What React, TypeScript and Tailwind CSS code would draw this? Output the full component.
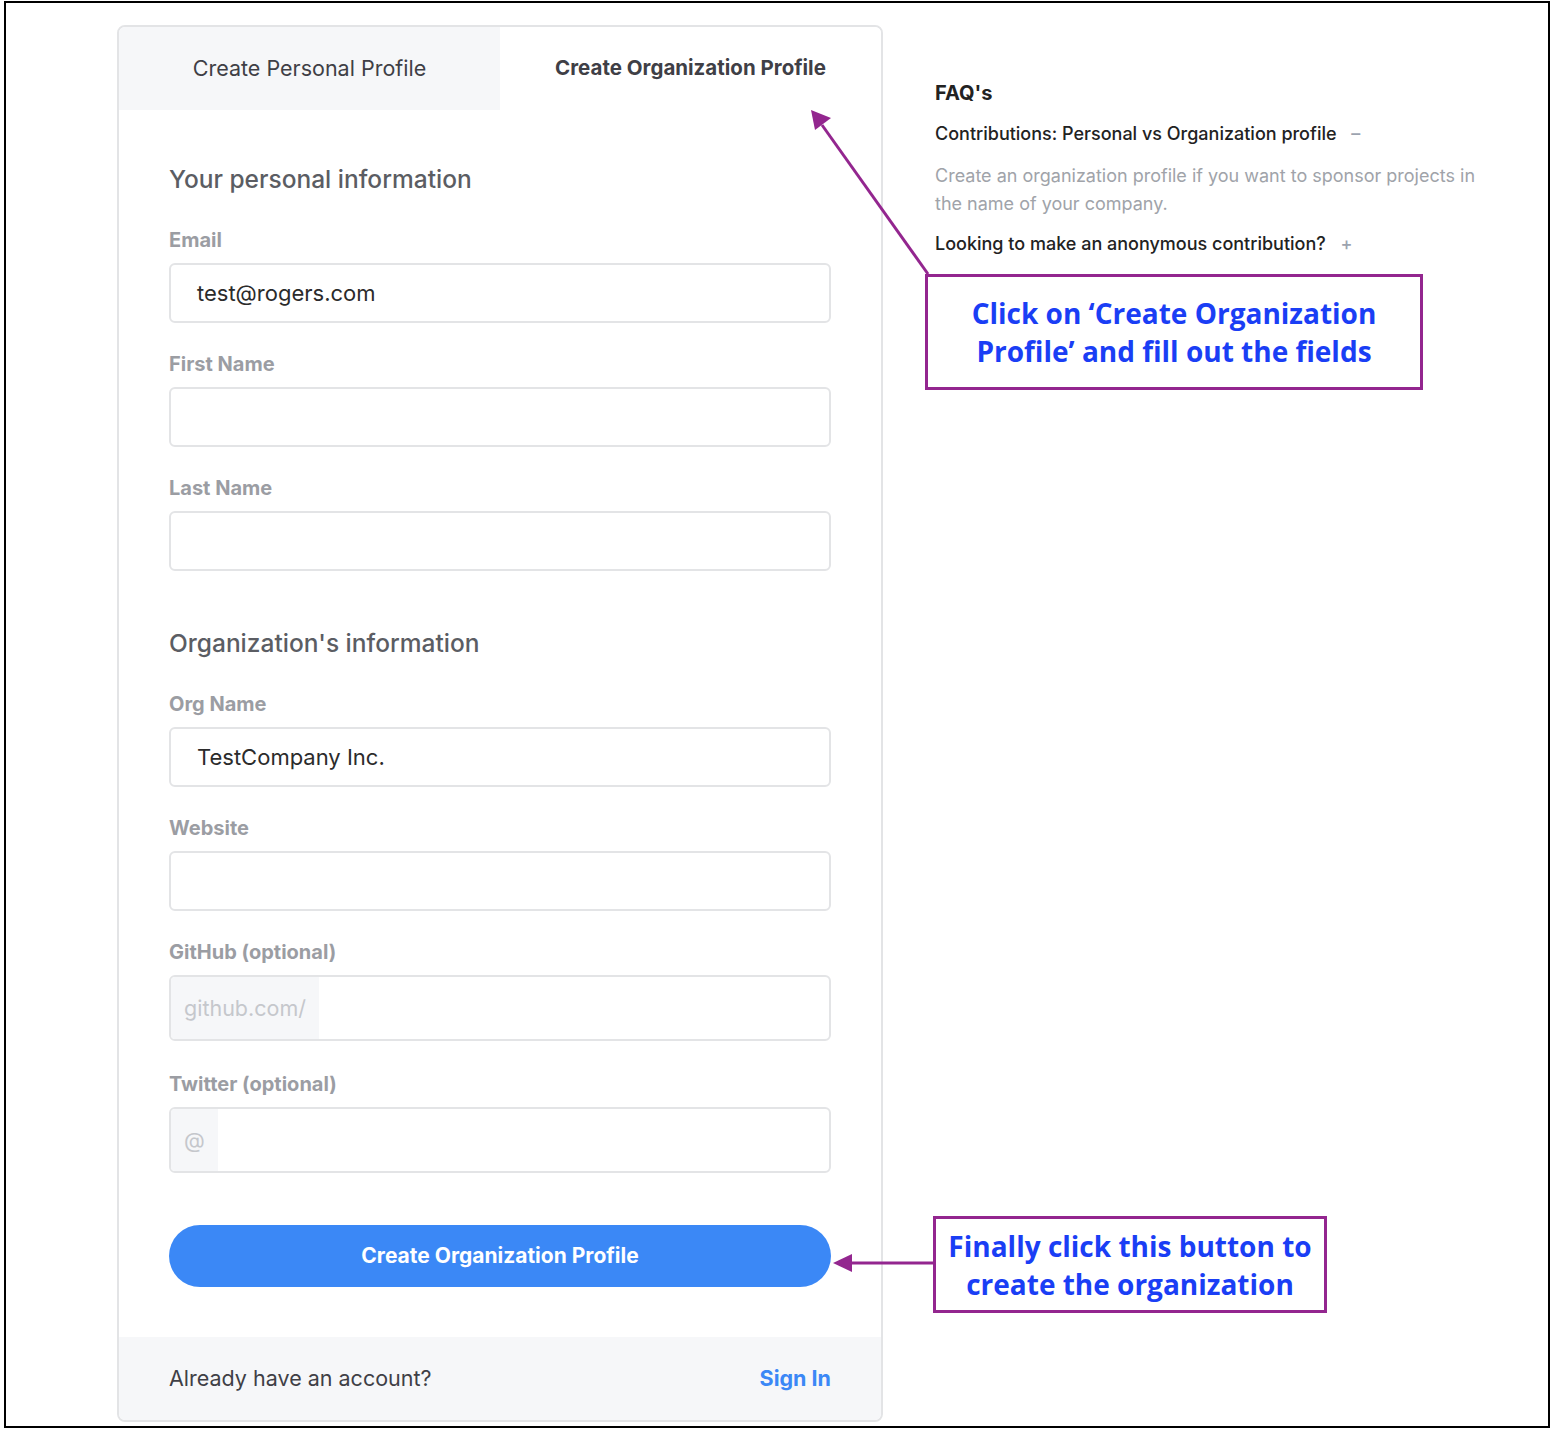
const ui = { fontFamily: "Inter, 'Liberation Sans', sans-serif" };
const note = { fontFamily: "'Open Sans', 'Noto Sans', sans-serif" };

function Field({ label, value, prefix, tall }: { label: string; value?: string; prefix?: string; tall?: boolean }) {
  return (
    <div className="flex flex-col">
      <label className="h-[28px] leading-[28px] text-[20px] font-bold text-[#9b9da3] mb-[9px]">{label}</label>
      {prefix ? (
        <div className={`flex items-stretch border-2 border-[#e3e4e6] rounded-md ${tall ? "h-[66px]" : "h-[60px]"} overflow-hidden`}>
          <span className="flex items-center bg-[#f6f7f9] px-[13px] text-[21.5px] text-[#c5c7cc]">{prefix}</span>
          <span className="flex-1" />
        </div>
      ) : (
        <div className="flex items-center h-[60px] border-2 border-[#e3e4e6] rounded-md pl-[26px] text-[22px] text-[#2b2b2b]">
          {value}
        </div>
      )}
    </div>
  );
}

export default function App() {
  return (
    <div className="relative w-[1554px] h-[1432px] bg-white pt-[1px] pl-[4px]" style={ui}>
      <div className="w-[1546px] h-[1427px] border-2 border-black flex items-start pl-[111px] pt-[22px]">
        {/* Signup card */}
        <div className="w-[766px] border-2 border-[#e3e4e6] rounded-lg overflow-hidden flex flex-col">
          <div className="flex h-[83px]">
            <div className="w-1/2 bg-[#f6f7f9] flex items-center justify-center text-[21.5px] text-[#3f3f46]">
              Create Personal Profile
            </div>
            <div className="w-1/2 bg-white flex items-center justify-center text-[20.5px] font-bold text-[#3f3f46]">
              Create Organization Profile
            </div>
          </div>

          <div className="px-[50px] pt-[53px] pb-[50px] flex flex-col">
            <h2 className="text-[24.5px] leading-[32px] font-medium text-[#5b5d63] mb-[31px]">Your personal information</h2>
            <div className="flex flex-col gap-[27px]">
              <Field label="Email" value="test@rogers.com" />
              <Field label="First Name" />
              <Field label="Last Name" />
            </div>

            <h2 className="text-[24.5px] leading-[32px] font-medium text-[#5b5d63] mt-[56px] mb-[31px]">Organization's information</h2>
            <div className="flex flex-col gap-[27px]">
              <Field label="Org Name" value="TestCompany Inc." />
              <Field label="Website" />
              <Field label="GitHub (optional)" prefix="github.com/" tall />
              <div className="mt-[2px]">
                <Field label="Twitter (optional)" prefix="@" tall />
              </div>
            </div>

            <button className="mt-[52px] h-[62px] rounded-full bg-[#3b88f6] text-white text-[21px] font-bold">
              Create Organization Profile
            </button>
          </div>

          <div className="h-[83px] bg-[#f6f7f9] px-[50px] flex items-center justify-between text-[21.5px]">
            <span className="text-[#3f3f46]">Already have an account?</span>
            <span className="font-bold text-[#3b88f6]">Sign In</span>
          </div>
        </div>

        {/* FAQ */}
        <div className="ml-[52px] mt-[54px] w-[565px] flex flex-col">
          <h3 className="text-[20px] leading-[28px] font-bold text-[#222]">FAQ's</h3>
          <div className="mt-[13px] text-[18px] leading-[28px] font-medium text-[#222]">
            Contributions: Personal vs Organization profile <span className="ml-[10px] text-[#9ca3af]">–</span>
          </div>
          <p className="mt-[14px] text-[18px] leading-[28px] text-[#a0a3a9]">
            Create an organization profile if you want to sponsor projects in the name of your company.
          </p>
          <div className="mt-[12px] text-[18px] leading-[28px] font-medium text-[#222]">
            Looking to make an anonymous contribution? <span className="ml-[10px] text-[#9ca3af]">+</span>
          </div>
        </div>
      </div>

      {/* Annotations */}
      <div
        className="absolute left-[925px] top-[274px] w-[498px] h-[116px] border-[3px] border-[#93268f] bg-white flex items-center justify-center text-center text-[28px] leading-[38px] font-bold text-[#1a3ef5]"
        style={note}
      >
        <span>Click on ‘Create Organization<br />Profile’ and fill out the fields</span>
      </div>
      <div
        className="absolute left-[933px] top-[1216px] w-[394px] h-[97px] border-[3px] border-[#93268f] bg-white flex items-center justify-center text-center text-[28px] leading-[38px] font-bold text-[#1a3ef5]"
        style={note}
      >
        <span>Finally click this button to<br />create the organization</span>
      </div>

      <svg className="absolute inset-0 pointer-events-none" width="1554" height="1432">
        <line x1="928" y1="274" x2="822" y2="125" stroke="#93268f" strokeWidth="3" />
        <polygon points="811,110 831,118 815,130" fill="#93268f" />
        <line x1="933" y1="1263" x2="850" y2="1263" stroke="#93268f" strokeWidth="3" />
        <polygon points="833,1263 852,1254 852,1272" fill="#93268f" />
      </svg>
    </div>
  );
}
